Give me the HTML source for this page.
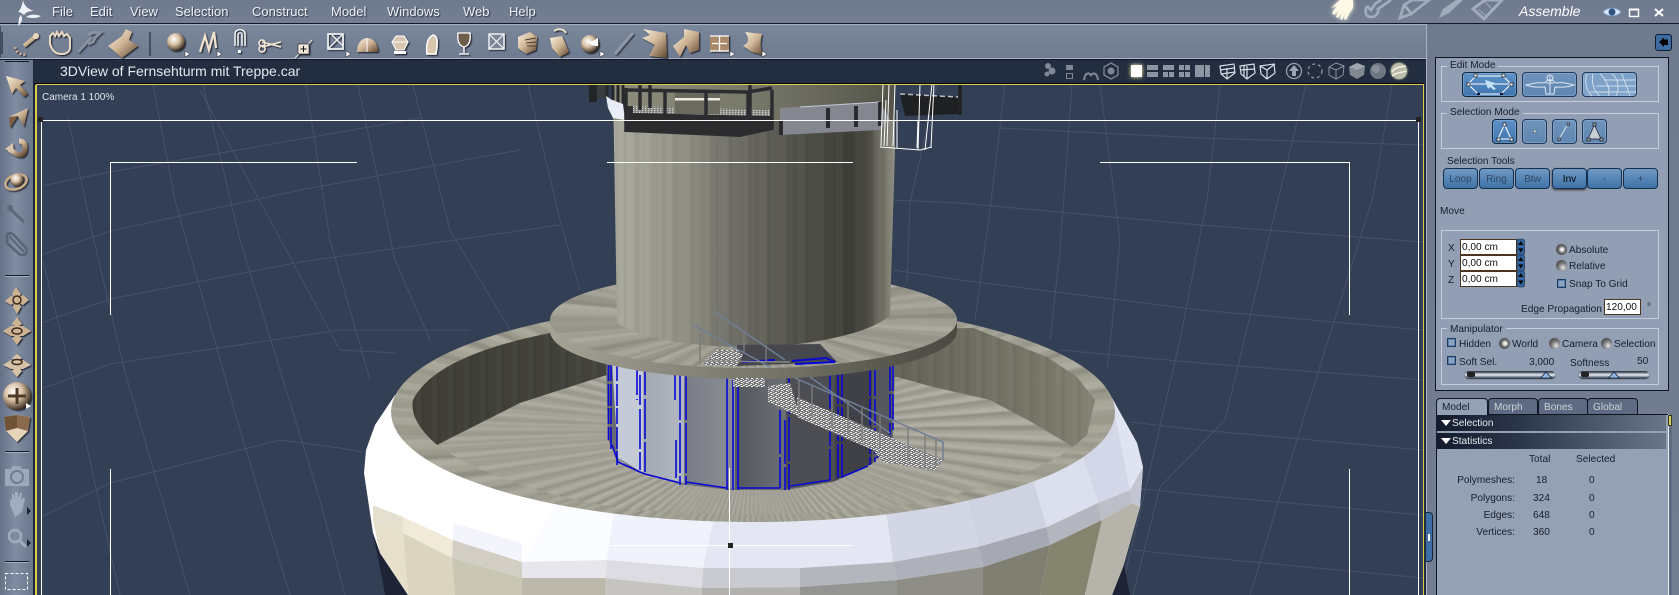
<!DOCTYPE html>
<html><head><meta charset="utf-8"><style>
html,body{margin:0;padding:0;background:#717c90}
#r{position:relative;width:1679px;height:595px;overflow:hidden;background:#717c90;font-family:"Liberation Sans",sans-serif;font-size:10.1px;color:#161e2c}
#r>*{position:absolute}
.l{position:absolute;left:0;top:0;width:1679px;height:595px}
svg.l{overflow:visible}
.t{position:absolute;white-space:nowrap;line-height:12px}
.m{font-size:13px;color:#eef1f6;text-shadow:1px 1px 1px #2a3244;top:4px;line-height:15px}
.b{position:absolute;box-sizing:border-box;border:1px solid #1f3a5c;border-radius:4px;background:linear-gradient(#6f93bb,#5f86b2);box-shadow:inset 0 0 0 1px rgba(200,220,240,.25)}
.tb{position:absolute;box-sizing:border-box;height:21px;top:168px;border:1px solid #14304f;border-radius:4px;background:linear-gradient(#6f9ac4,#3f72a8);color:#2f4763;text-align:center;line-height:21px;font-size:10.1px}
.g{position:absolute;box-sizing:border-box;border:1px solid #c3cddb;left:1441px;width:218px}
.lg{position:absolute;background:#929eb3;padding:0 3px;left:1447px;line-height:12px}
.in{position:absolute;box-sizing:border-box;background:#fff;border:1px solid #4a3520;font-size:10.1px;line-height:16px;padding-left:1px;color:#111;height:16px}
.cb{position:absolute;width:7px;height:7px;border:1px solid #1b3e66;background:#8ea3bf;box-shadow:inset 0 0 0 1px #5c82ad}
.rd{position:absolute;width:11px;height:11px;border-radius:50%;background:radial-gradient(circle at 65% 70%,#e8e8e8,#777 45%,#2c2c2c)}
.sec{position:absolute;left:1436px;width:230px;height:16px;background:linear-gradient(90deg,#121a2c,#2b3548 35%,#6a7588);color:#e8ecf2;line-height:18px;padding-left:16px;box-sizing:border-box;font-size:10.1px}
.sec:before{content:"";position:absolute;left:5px;top:5px;border-left:5px solid transparent;border-right:5px solid transparent;border-top:6px solid #fff}
.tab{position:absolute;top:398px;height:17px;box-sizing:border-box;border:1px solid #0f1626;border-bottom:0;border-radius:4px 4px 0 0;background:#5d6a81;color:#cdd3de;line-height:18px;padding-left:5px;font-size:10.1px}
.sl{position:absolute;height:7px;border-radius:4px;background:linear-gradient(#23272f,#7e8796 30%,#eef2f8 55%,#384a66);box-shadow:0 1px 1px #333}
</style></head><body><div id="r">

<!-- chrome backgrounds -->
<div style="left:0;top:0;width:1679px;height:23px;background:linear-gradient(#6e798d,#747f93)"></div>
<div style="left:0;top:23px;width:1679px;height:1px;background:#10182a"></div>
<div style="left:0;top:24px;width:1426px;height:1px;background:#a5afc0"></div>
<div style="left:0;top:25px;width:1426px;height:33px;background:linear-gradient(#7a869a,#6f7b90)"></div>
<div style="left:0;top:58px;width:1426px;height:1px;background:#aab4c5"></div>
<div style="left:0;top:59px;width:1426px;height:1px;background:#10182a"></div>
<div style="left:0;top:60px;width:33px;height:535px;background:linear-gradient(90deg,#657186,#808da3 45%,#6a768b)"></div>
<div style="left:33px;top:60px;width:3px;height:535px;background:#1d2739"></div>
<div style="left:34px;top:60px;width:1392px;height:24px;background:#222d40;border-bottom:1px solid #05080f;box-sizing:border-box"></div>
<div style="left:1426px;top:24px;width:1px;height:571px;background:#a9b3c4"></div>
<div style="left:1424px;top:60px;width:2px;height:535px;background:#222d40"></div>

<!-- viewport background -->
<div style="left:36px;top:84px;width:1388px;height:511px;background:#333f55"></div>

<svg class="l" viewBox="0 0 1679 595" style="clip-path:inset(85px 256px 0 37px)">
<g fill="none" stroke="#465269" stroke-width="1">
<polyline points="41,186 110,172 250,148 420,118"/>
<polyline points="41,255 110,231 300,190 520,150"/>
<polyline points="41,323 110,299 300,262 560,225"/>
<polyline points="41,389 110,364 340,330 470,330"/>
<polyline points="41,517 110,483 280,440 340,448 363,452"/>
<polyline points="200,90 340,350 395,353"/>
<polyline points="68,118 94,241 125,372 190,595"/>
<polyline points="43,261 72,377 100,507 120,595"/>
<polyline points="153,85 175,200 240,430 290,595"/>
<polyline points="203,85 240,240 320,500 345,595"/>
<polyline points="306,85 330,240 370,380"/>
<polyline points="358,85 395,260 430,340"/>
<polyline points="413,85 450,230 510,330"/>
<polyline points="528,85 560,220 580,290"/>
<polyline points="937,85 910,203 907,283"/>
<polyline points="1005,85 990,210 975,320"/>
<polyline points="1072,85 1060,250 1050,340"/>
<polyline points="1100,85 1120,240 1112,327 1107,370"/>
<polyline points="1220,85 1207,200 1180,340 1143,500 1120,595"/>
<polyline points="1306,85 1278,200 1225,420 1160,487 1133,595"/>
<polyline points="1392,85 1373,197 1300,430 1250,595"/>
<polyline points="893,200 960,203 1200,225 1423,242"/>
<polyline points="893,270 960,280 1200,310 1423,330"/>
<polyline points="1000,128 1200,138 1423,145"/>
<polyline points="1060,350 1200,363 1423,380"/>
<polyline points="1130,422 1200,430 1423,450"/>
<polyline points="1133,488 1200,495 1423,515"/>
<polyline points="1133,550 1200,557 1423,578"/>
</g>
<!-- dark base under tire -->
<path d="M373,533 L383,583 L385,595 L430,595 L420,540Z" fill="#1e2436"/>
<path d="M1108,595 L1123,560 L1130,595Z" fill="#1e2436"/>
<!-- white tire base -->
<path d="M395,395 L375,425 L366,450 L364,473 L373,533 L380,553 L408,595 L1112,595 L1123,567 L1140,507 L1143,467 L1137,443 L1112,398 L900,380 L600,380Z" fill="#fff"/>
<!-- row 1 -->
<path d="M570,480 L617,480 L607,560 L522,562Z" fill="#fbfcff"/>
<path d="M617,490 L720,490 L703,568 L607,560Z" fill="#f0f2fc"/>
<path d="M720,490 L883,490 L893,562 L800,568 L703,568Z" fill="#e4e7f3"/>
<path d="M883,490 L963,480 L978,547 L893,562Z" fill="#d3d7e5"/>
<path d="M963,480 L1027,460 L1047,527 L978,547Z" fill="#ced2e1"/>
<path d="M1027,460 L1077,440 L1098,503 L1047,527Z" fill="#dcdfee"/>
<path d="M1077,440 L1115,410 L1130,490 L1098,503Z" fill="#d3d7e8"/>
<path d="M1112,398 L1137,443 L1143,467 L1130,490 L1115,415Z" fill="#dfe3f2"/>
<path d="M1130,490 L1143,467 L1140,507 L1132,503Z" fill="#c2c6d2"/>
<!-- row 2 -->
<path d="M373,505 L403,517 L403,533 L373,520Z" fill="#e4dfcf"/>
<path d="M403,517 L453,540 L452,558 L403,533Z" fill="#f1ead8"/>
<path d="M453,523 L522,543 L522,562 L453,540Z" fill="#f4f4fd"/>
<path d="M453,540 L522,562 L522,578 L452,558Z" fill="#d2cec4"/>
<path d="M522,562 L607,560 L605,578 L522,578Z" fill="#e6e6ec"/>
<path d="M607,560 L703,568 L702,588 L605,578Z" fill="#dcdce2"/>
<path d="M703,568 L800,568 L800,587 L702,588Z" fill="#c9cbd1"/>
<path d="M800,568 L893,562 L897,580 L800,587Z" fill="#b4b6be"/>
<path d="M893,562 L978,547 L983,567 L897,580Z" fill="#aeb0ba"/>
<path d="M978,547 L1047,527 L1050,545 L983,567Z" fill="#a6a8b4"/>
<path d="M1047,527 L1098,503 L1102,520 L1050,545Z" fill="#b5b7c0"/>
<path d="M1098,503 L1130,490 L1132,503 L1102,520Z" fill="#bcbec8"/>
<!-- row 3 -->
<path d="M373,520 L403,533 L408,595 L380,553Z" fill="#e6dfca"/>
<path d="M403,533 L452,558 L455,595 L408,595Z" fill="#dbd4be"/>
<path d="M452,558 L522,578 L522,595 L455,595Z" fill="#c9c6b4"/>
<path d="M522,578 L605,578 L605,595 L522,595Z" fill="#bcb9ac"/>
<path d="M605,578 L702,588 L702,595 L605,595Z" fill="#c6c4c0"/>
<path d="M702,588 L800,587 L800,595 L702,595Z" fill="#b2b1b0"/>
<path d="M800,587 L897,580 L897,595 L800,595Z" fill="#949492"/>
<path d="M897,580 L983,567 L983,595 L897,595Z" fill="#8e8e86"/>
<path d="M983,567 L1050,545 L1040,595 L983,595Z" fill="#7f7f72"/>
<path d="M1050,545 L1102,520 L1085,595 L1040,595Z" fill="#85846f"/>
<path d="M1102,520 L1132,503 L1140,507 L1123,567 L1112,595 L1085,595Z" fill="#b6b4aa"/>
</svg>

<!-- rim -->
<div class="l" style="filter:blur(.8px);clip-path:path('M391,412 A362,110 0 1 1 1115,412 A362,110 0 1 1 391,412 Z');background:repeating-conic-gradient(from 3deg at 753px 440px,rgba(255,255,255,.06) 0 1.3deg,rgba(0,0,0,.06) 1.3deg 2.9deg,transparent 2.9deg 4.3deg),repeating-conic-gradient(at 753px 440px,rgba(0,0,0,.07) 0 .9deg,transparent .9deg 2.3deg,rgba(255,255,255,.05) 2.3deg 3.7deg),#a3a294"></div>

<!-- wall -->
<div class="l" style="clip-path:path('M437,445 C420,430 410,415 413,400 C430,365 490,345 550,333 L973,328 L1047,357 L1077,377 L1095,400 L1087,435 L1073,447 L1033,423 L990,400 L933,387 L897,377 L607,375 L520,403 Z');background:repeating-linear-gradient(90deg,rgba(255,255,255,.025) 0 5px,rgba(0,0,0,.035) 5px 9px,transparent 9px 16px),linear-gradient(90deg,#5e5e55 0,#4a4a42 10%,#3f3f38 25%,#45453e 40%,#777769 62%,#a3a396 75%,#94948a 90%,#9c9c8e 100%)"></div>

<!-- floor -->
<div class="l" style="filter:blur(.8px);clip-path:path('M437,445 L520,403 L607,375 L897,377 L933,387 L990,400 L1033,423 L1073,447 C1040,472 970,496 883,508 C800,516 700,516 617,508 C540,494 480,475 437,445 Z');background:repeating-conic-gradient(from 1deg at 753px 430px,rgba(255,255,255,.07) 0 1.1deg,rgba(0,0,0,.07) 1.1deg 2.4deg,transparent 2.4deg 3.1deg),repeating-conic-gradient(at 753px 430px,rgba(0,0,0,.07) 0 .7deg,transparent .7deg 2.1deg,rgba(255,255,255,.06) 2.1deg 3.3deg),#a7a599"></div>

<!-- glass -->
<svg class="l" viewBox="0 0 1679 595">
<defs>
<linearGradient id="p3" x1="0" x2="1"><stop offset="0" stop-color="#787c85"/><stop offset="1" stop-color="#8b8e95"/></linearGradient>
<linearGradient id="p4" x1="0" x2="1"><stop offset="0" stop-color="#54575e"/><stop offset="1" stop-color="#6c6f76"/></linearGradient>
<linearGradient id="p2" x1="0" x2="1"><stop offset="0" stop-color="#a2a8b2"/><stop offset="1" stop-color="#b2b8c2"/></linearGradient>
</defs>
<path d="M606,360 L895,360 L893,440 L873,463 L833,482 L787,490 L730,490 L680,484 L638,472 L617,458 L608,440Z" fill="#6a6c72"/>
<path d="M612,360 L643,360 L643,473 L618,458Z" fill="#c4cbd6"/>
<path d="M643,360 L684,360 L684,483 L643,473Z" fill="url(#p2)"/>
<path d="M684,360 L735,360 L735,489 L684,483Z" fill="url(#p3)"/>
<path d="M735,360 L786,360 L786,489 L735,489Z" fill="url(#p4)"/>
<path d="M786,360 L835,360 L835,481 L786,489Z" fill="#4c4e54"/>
<path d="M835,360 L872,360 L872,464 L835,481Z" fill="#3f4146"/>
<path d="M872,360 L892,360 L892,440 L872,464Z" fill="#55575d"/>
<g fill="none" stroke="#0808d2" stroke-width="1.6">
<path d="M608.500,365V440 M611,365V450 M617,365V465" stroke-dasharray="16 3 22 2"/>
<path d="M637,365V400 M640,375V470 M645,365V474" stroke-dasharray="30 4 40 3"/>
<path d="M675,370V400 M676,440V478 M680,370V485 M686,370V485" stroke-dasharray="50 3"/>
<path d="M727,370V490 M733,380V490 M738,380V490"/>
<path d="M780,410V488 M785,420V490 M789,370V490" stroke-dasharray="44 3"/>
<path d="M830,375V480 M838,370V478 M842,370V478" stroke-dasharray="34 3"/>
<path d="M870,370V465 M875,370V462 M890,365V435 M893,365V430" stroke-dasharray="26 3"/>
<path d="M612,445 L618,462 L640,472 L645,474 L680,483 M686,482 L727,488 M738,488 L780,488 M790,486 L830,480 M842,477 L868,466 M877,458 L890,440"/>
</g>
</svg>

<!-- disk edge + top -->
<svg class="l" viewBox="0 0 1679 595">
<defs><linearGradient id="de" x1="0" x2="1"><stop offset="0" stop-color="#a5a396"/><stop offset=".3" stop-color="#8a887c"/><stop offset=".6" stop-color="#707064"/><stop offset=".85" stop-color="#55554c"/><stop offset="1" stop-color="#4a4a42"/></linearGradient></defs>
<path d="M550,320 L550,331 A203,48 0 0 0 957,331 L957,320Z" fill="url(#de)"/>
</svg>
<div class="l" style="filter:blur(.7px);clip-path:path('M550,320 A203,48 0 1 1 957,320 A203,48 0 1 1 550,320 Z');background:repeating-conic-gradient(from 2deg at 753px 320px,rgba(255,255,255,.07) 0 3deg,rgba(0,0,0,.07) 3deg 6.500deg,transparent 6.500deg 9deg),repeating-conic-gradient(at 753px 320px,rgba(0,0,0,.06) 0 1.500deg,transparent 1.500deg 4deg,rgba(255,255,255,.06) 4deg 5.500deg),#a19f93"></div>

<!-- main cylinder -->
<div class="l" style="clip-path:path('M613,84 L895,84 L895,150 L890,315 C870,335 800,347 750,347 C700,347 640,340 617,323 Z');background:repeating-linear-gradient(90deg,rgba(255,255,255,.025) 0 7px,rgba(0,0,0,.03) 7px 11px,transparent 11px 19px),repeating-linear-gradient(90deg,rgba(0,0,0,.03) 0 3px,transparent 3px 13px),linear-gradient(90deg,transparent 0,transparent 613px,#abaa9f 613px,#a3a296 640px,#8e8d81 690px,#74746c 725px,#62625a 760px,#4d4d46 810px,#3e3e38 852px,#4c4c44 868px,#77766b 884px,#8f8e82 895px)"></div>

<!-- stairs, structure, frame -->
<svg class="l" viewBox="0 0 1679 595" style="clip-path:inset(85px 256px 0 37px)">
<defs>
<pattern id="sp" width="5" height="4" patternUnits="userSpaceOnUse"><rect width="5" height="4" fill="#77777a"/><rect x="0" y="0" width="2" height="1" fill="#eee"/><rect x="3" y="1" width="2" height="1" fill="#ddd"/><rect x="1" y="2" width="2" height="1" fill="#f4f4f4"/><rect x="3" y="3" width="1" height="1" fill="#ccc"/></pattern>
<pattern id="sg" width="3" height="2" patternUnits="userSpaceOnUse"><rect width="3" height="2" fill="#94948e"/><rect width="1" height="1" fill="#d0d0cc"/><rect x="2" y="1" width="1" height="1" fill="#6f6f6a"/></pattern>
<linearGradient id="topc" x1="0" x2="1"><stop offset="0" stop-color="#8e8d7c"/><stop offset=".5" stop-color="#77786a"/><stop offset="1" stop-color="#545449"/></linearGradient>
</defs>
<!-- opening in disk -->
<path d="M737,345 L820,344 L837,362 L737,366Z" fill="#46484e"/>
<path d="M742,362 L775,360 M792,361 L826,358 L835,362 L795,364" fill="none" stroke="#0808d2" stroke-width="2"/>
<path d="M703,365 L717,350 L737,350 L743,355 L737,366Z" fill="url(#sp)"/>
<path d="M733,378 L765,378 L765,387 L733,387Z" fill="url(#sp)"/>
<path d="M768,386 L790,383 L800,417 L768,402Z" fill="url(#sp)"/>
<path d="M797,397 L943,460 L935,470 L883,462 L873,450 L797,417Z" fill="url(#sp)"/>
<g fill="none" stroke="#6f7f96" stroke-width="1.500">
<path d="M715,312 L785,360"/><path d="M693,325 L770,367"/>
<path d="M795,378 L943,442"/><path d="M810,377 L890,433"/>
<path d="M943,442 V460"/>
</g>
<g fill="none" stroke="#7b7c78" stroke-width="1.400">
<path d="M700,333V365M720,315V355M744,332V352M766,345V362M799,380V412M812,386V418M832,394V428M848,401V434M862,408V442M880,416V447M908,428V460M925,435V468M936,440V466"/>
<path d="M700,361 L790,362" stroke="#8a8a86"/>
</g>

<!-- top structure -->
<rect x="613" y="84" width="282" height="36" fill="url(#topc)"/>
<path d="M780,108 L880,102 L890,120 L880,130 L780,135Z" fill="#84878f"/>
<path d="M800,107 L880,102" stroke="#c6cad4" stroke-width="1"/>
<path d="M781,120 V135 M828,108V128 M856,106V127 M880,102V126" stroke="#2a2b2e" stroke-width="4"/>
<rect x="589" y="84" width="8" height="18" fill="#232428"/><rect x="597" y="84" width="9" height="14" fill="#3a3c40"/>
<path d="M607,84V100 M613,84V100 M618,84V105 M623,84V112" stroke="#27282c" stroke-width="3"/>
<path d="M606,96 L612,100 L623,104 L625,120 L613,118 L608,108Z" fill="#e8edf8"/>
<path d="M626,106 L772,110 L772,130 L740,137 L626,132Z" fill="#2c2c2f"/>
<path d="M633,106 L770,110 L770,116 L633,113Z" fill="url(#sg)"/>
<rect x="675" y="90" width="45" height="24" fill="#6a6b5e"/>
<rect x="675" y="98" width="45" height="2.500" fill="#ecebe4"/>
<g fill="none" stroke="#2c2c30" stroke-width="3.500">
<path d="M626,90 L748,92 L748,132 M772,90 L772,130 M748,92 L772,88"/>
<path d="M626,88V132 M665,90V130 M706,90V132 M640,84V110 M650,84V108 M750,84V116"/>
</g>
<path d="M900,94 L958,97 L958,114 L905,116 Z" fill="#1f2022"/>
<path d="M900,94 L958,97" stroke="#b8bcc4" stroke-width="1.500" stroke-dasharray="5 3"/>
<path d="M960,84 V115" stroke="#232326" stroke-width="4"/>
<g fill="none" stroke="#fff" stroke-width="1">
<path d="M881,146 L883,84 M887,146 L889,84 M893,146 L895,84 M884,146 L886,100 M897,148 V110 M880,147 L920,150 L932,147"/>
<path d="M918,150 L920,84 M925,150 L932,84 M931,147 L934,84 M917,148 L918,120"/>
</g>
<!-- safe frame -->
<g stroke="#fff" stroke-width="1" fill="none" shape-rendering="crispEdges">
<path d="M41,120.500H1418.500M41.500,120V595M1418.500,120V595"/>
<path d="M110,162.500H357M607,162.500H853M1100,162.500H1349"/>
<path d="M110.500,162V315M1349.500,162V315M110.500,469V595M1349.500,469V595"/>
<path d="M729.500,468V595"/>
</g>
<path d="M610,545.500H853" stroke="#fff" stroke-width="1"/>
<rect x="728" y="543" width="5" height="5" fill="#222"/>
<rect x="38" y="117" width="5" height="5" fill="#222"/><rect x="1416" y="117" width="5" height="5" fill="#222"/>
</svg>

<!-- yellow border -->
<div style="left:36px;top:84px;width:1388px;height:511px;border:1px solid #d8cc48;border-bottom:0;box-sizing:border-box"></div>
<div style="left:35px;top:85px;width:1px;height:510px;background:#d8cc48"></div>

<!-- right panel -->
<div style="left:1427px;top:24px;width:252px;height:571px;background:linear-gradient(#6f7a8e,#727d91)"></div>
<div style="left:1435px;top:57px;width:234px;height:334px;box-sizing:border-box;background:#929eb3;border:1px solid #0e1420"></div>
<div style="left:1655px;top:34px;width:17px;height:17px;box-sizing:border-box;background:#3e6ca2;border:1px solid #0e1d30;border-radius:3px"></div>
<svg class="l" viewBox="0 0 1679 595"><path d="M1659,42 L1664,37.500 V39.500 H1668 V45 H1664 V47Z" fill="#000"/></svg>

<div class="g" style="top:66px;height:36px"></div><span class="lg" style="top:60px">Edit Mode</span>
<div class="b" style="left:1462px;top:72px;width:55px;height:25px;background:linear-gradient(#5e92c8,#3f75ae);border-color:#10283f"></div>
<div class="b" style="left:1522px;top:72px;width:55px;height:25px"></div>
<div class="b" style="left:1582px;top:72px;width:55px;height:25px;background:#7ea2c8"></div>
<div class="g" style="top:113px;height:36px"></div><span class="lg" style="top:107px">Selection Mode</span>
<div class="b" style="left:1492px;top:119px;width:25px;height:25px;background:linear-gradient(#5e92c8,#3f75ae);border-color:#10283f"></div>
<div class="b" style="left:1522px;top:119px;width:25px;height:25px"></div>
<div class="b" style="left:1552px;top:119px;width:25px;height:25px"></div>
<div class="b" style="left:1582px;top:119px;width:25px;height:25px"></div>
<svg class="l" viewBox="0 0 1679 595">
<g fill="none" stroke="#fff" stroke-width="1">
<path d="M1468,84 L1476,76 L1503,76 L1511,84 L1501,94 L1478,94Z M1468,84H1511"/>
</g>
<path d="M1485,80 L1495,83 L1492,85 L1496,89 L1494,90 L1490,87 L1488,89Z" fill="#c6e2fb"/>
<g fill="#fff" stroke="#111" stroke-width=".7"><rect x="1474" y="74" width="3" height="3"/><rect x="1502" y="74" width="3" height="3"/><rect x="1467" y="83" width="3" height="3"/><rect x="1510" y="83" width="3" height="3"/></g>
<rect x="1477" y="93" width="3" height="2" fill="#113"/><rect x="1500" y="93" width="3" height="2" fill="#113"/>
<!-- figure -->
<g fill="none" stroke="#dce6f0" stroke-width="1"><path d="M1526,85 C1535,83 1538,82 1544,83 L1548,80 H1552 L1556,83 C1562,82 1566,83 1574,85 C1565,88 1560,87 1555,87 L1554,94 H1546 L1545,87 C1540,87 1534,88 1526,85Z"/><circle cx="1550" cy="78" r="3"/><path d="M1546,83H1554M1550,76V94"/></g>
<!-- mesh -->
<g fill="none" stroke="#d6e4f2" stroke-width="1" opacity=".9"><path d="M1587,74 C1584,82 1587,92 1592,96 M1593,74 C1591,82 1594,92 1600,96 M1600,74 C1603,76 1612,88 1608,96 M1612,74 C1618,78 1620,88 1616,96 M1622,74 L1630,96 M1604,80 H1636 M1596,86 H1636 M1590,92 H1636"/></g>
<!-- selection mode -->
<g fill="none" stroke="#fff"><path d="M1504.500,124.500 L1498,139 H1511Z"/></g>
<g fill="#fff" stroke="#111" stroke-width=".7"><rect x="1503" y="123" width="3" height="3"/><rect x="1497" y="138" width="3" height="3"/><rect x="1510" y="138" width="3" height="3"/></g>
<rect x="1533.500" y="130" width="2.500" height="2.500" fill="#dfe7f0" stroke="#555" stroke-width=".5"/>
<path d="M1559,139 L1568,124" stroke="#d6e0ec"/><rect x="1558" y="138" width="2.500" height="2.500" fill="#99a" stroke="#222" stroke-width=".6"/><rect x="1567" y="123" width="2.500" height="2.500" fill="#99a" stroke="#222" stroke-width=".6"/>
<path d="M1594.500,125 L1588,139 H1601Z" fill="#c8cdd6" stroke="#223" stroke-width=".7"/>
<g fill="#9aa" stroke="#111" stroke-width=".7"><rect x="1593" y="123" width="3" height="3"/><rect x="1587" y="138" width="3" height="3"/><rect x="1600" y="138" width="3" height="3"/></g>
</svg>

<span class="t" style="left:1447px;top:156px">Selection Tools</span>
<div class="tb" style="left:1443px;width:35px">Loop</div>
<div class="tb" style="left:1479px;width:35px">Ring</div>
<div class="tb" style="left:1515px;width:35px">Btw</div>
<div class="tb" style="left:1552px;width:35px;color:#000;box-shadow:0 1px 2px #333">Inv</div>
<div class="tb" style="left:1587px;width:35px">-</div>
<div class="tb" style="left:1623px;width:35px">+</div>

<span class="t" style="left:1440px;top:206px">Move</span>
<div class="g" style="top:230px;height:89px"></div>
<span class="t" style="left:1448px;top:243px">X</span><span class="t" style="left:1448px;top:259px">Y</span><span class="t" style="left:1448px;top:275px">Z</span>
<div class="in" style="left:1460px;top:239px;width:57px">0,00 cm</div>
<div class="in" style="left:1460px;top:255px;width:57px">0,00 cm</div>
<div class="in" style="left:1460px;top:271px;width:57px">0,00 cm</div>
<svg class="l" viewBox="0 0 1679 595">
<g fill="#3566a0" stroke="#14263c" stroke-width=".6"><rect x="1517" y="239" width="7.500" height="16" rx="2"/><rect x="1517" y="255" width="7.500" height="16" rx="2"/><rect x="1517" y="271" width="7.500" height="16" rx="2"/></g>
<path d="M1520.800,241 l2.700,4 h-5.400Z M1520.800,252.500 l2.700,-4 h-5.400Z M1520.800,257 l2.700,4 h-5.400Z M1520.800,268.500 l2.700,-4 h-5.400Z M1520.800,273 l2.700,4 h-5.400Z M1520.800,284.500 l2.700,-4 h-5.400Z" fill="#000"/>
</svg>
<div class="rd" style="left:1556px;top:244px;background:radial-gradient(circle at 55% 50%,#eee 15%,#666 45%,#333)"></div><span class="t" style="left:1569px;top:245px">Absolute</span>
<div class="rd" style="left:1556px;top:260px"></div><span class="t" style="left:1569px;top:261px">Relative</span>
<div class="cb" style="left:1557px;top:279px"></div><span class="t" style="left:1569px;top:279px">Snap To Grid</span>
<span class="t" style="left:1521px;top:304px">Edge Propagation</span>
<div class="in" style="left:1604px;top:299px;width:37px;height:16px">120,00</div>
<span class="t" style="left:1647px;top:302px">°</span>

<div class="g" style="top:328px;height:57px"></div><span class="lg" style="top:324px">Manipulator</span>
<div class="cb" style="left:1447px;top:338px"></div><span class="t" style="left:1459px;top:339px">Hidden</span>
<div class="rd" style="left:1499px;top:338px;background:radial-gradient(circle at 55% 50%,#eee 15%,#666 45%,#333)"></div><span class="t" style="left:1512px;top:339px">World</span>
<div class="rd" style="left:1549px;top:338px"></div><span class="t" style="left:1562px;top:339px">Camera</span>
<div class="rd" style="left:1601px;top:338px"></div><span class="t" style="left:1614px;top:339px">Selection</span>
<div class="cb" style="left:1447px;top:356px"></div><span class="t" style="left:1459px;top:357px">Soft Sel.</span>
<span class="t" style="left:1529px;top:357px">3,000</span>
<span class="t" style="left:1570px;top:358px">Softness</span>
<span class="t" style="left:1637px;top:356px">50</span>
<div class="sl" style="left:1465px;top:371px;width:90px"></div>
<div class="sl" style="left:1579px;top:371px;width:70px"></div>
<svg class="l" viewBox="0 0 1679 595"><path d="M1540.500,378 L1546,372 L1551.500,378Z M1608.500,378 L1614,372 L1619.500,378Z" fill="#8fb7e6" stroke="#14263c" stroke-width=".8"/><rect x="1467" y="372" width="8" height="5" rx="2" fill="#222"/><rect x="1581" y="372" width="8" height="5" rx="2" fill="#222"/></svg>

<!-- tabs -->
<div style="left:1436px;top:414px;width:232px;height:181px;background:#94a0b4;border-left:1px solid #0e1420;box-sizing:border-box"></div>
<div class="tab" style="left:1488px;width:50px">Morph</div>
<div class="tab" style="left:1538px;width:50px">Bones</div>
<div class="tab" style="left:1587px;width:51px">Global</div>
<div class="tab" style="left:1436px;width:52px;height:18px;background:#94a0b4;color:#161e2c;border-right-color:#0e1420">Model</div>
<div style="left:1488px;top:414px;width:180px;height:1px;background:#0e1420"></div>
<div style="left:1668px;top:414px;width:1px;height:181px;background:#e8ecf2"></div>
<div style="left:1669px;top:414px;width:3px;height:181px;background:#5f6b80"></div>
<div style="left:1668px;top:415px;width:4px;height:11px;background:#d8cf62;border:1px solid #3a3a20;box-sizing:border-box"></div>
<div class="sec" style="top:415px">Selection</div>
<div class="sec" style="top:433px">Statistics</div>
<span class="t" style="left:1529px;top:454px">Total</span><span class="t" style="left:1576px;top:454px">Selected</span>
<span class="t" style="right:164px;top:475px">Polymeshes:</span><span class="t" style="left:1536px;top:475px">18</span><span class="t" style="left:1589px;top:475px">0</span>
<span class="t" style="right:164px;top:493px">Polygons:</span><span class="t" style="left:1533px;top:493px">324</span><span class="t" style="left:1589px;top:493px">0</span>
<span class="t" style="right:164px;top:510px">Edges:</span><span class="t" style="left:1533px;top:510px">648</span><span class="t" style="left:1589px;top:510px">0</span>
<span class="t" style="right:164px;top:527px">Vertices:</span><span class="t" style="left:1533px;top:527px">360</span><span class="t" style="left:1589px;top:527px">0</span>
<div style="left:1426px;top:512px;width:7px;height:50px;background:#3e6ea6;border:1px solid #14263c;border-left:0;border-radius:0 4px 4px 0;box-sizing:border-box"></div>
<div style="left:1428px;top:534px;width:2px;height:7px;background:#fff"></div>

<!-- menu text -->
<span class="t m" style="left:52px">File</span>
<span class="t m" style="left:90px">Edit</span>
<span class="t m" style="left:130px">View</span>
<span class="t m" style="left:175px">Selection</span>
<span class="t m" style="left:252px">Construct</span>
<span class="t m" style="left:331px">Model</span>
<span class="t m" style="left:387px">Windows</span>
<span class="t m" style="left:463px">Web</span>
<span class="t m" style="left:509px">Help</span>
<span class="t" style="left:1519px;top:3px;font-size:14px;line-height:16px;font-style:italic;color:#fff">Assemble</span>
<span class="t" style="left:60px;top:63px;font-size:14px;line-height:17px;color:#e4e8ee">3DView of Fernsehturm mit Treppe.car</span>
<span class="t" style="left:42px;top:92px;font-size:10px;color:#e2e6ec">Camera 1 100%</span>

<!-- icons -->
<svg class="l" viewBox="0 0 1679 595">
<defs>
<linearGradient id="c" x1="0" y1="0" x2="1" y2="1"><stop offset="0" stop-color="#fbf1e0"/><stop offset=".5" stop-color="#cdb394"/><stop offset="1" stop-color="#5d452f"/></linearGradient>
<radialGradient id="ball" cx=".38" cy=".35" r=".7"><stop offset="0" stop-color="#fff"/><stop offset=".45" stop-color="#d6bfa3"/><stop offset="1" stop-color="#2e2014"/></radialGradient>
<filter id="ds" x="-30%" y="-30%" width="170%" height="170%"><feDropShadow dx="1.200" dy="1.200" stdDeviation=".6" flood-color="#141a28" flood-opacity=".9"/></filter>
</defs>
<path d="M0,26V58M2,32V54M150,32V56" stroke="#151c2c" stroke-width="1"/>
<!-- logo -->
<path d="M23,0 C24,6 28,9 34,11 C29,11 26,12 24,15 C21,13 20,12 18,12 C21,9 22,5 23,0Z M41,16 C35,14 30,14 26,17 C30,18 36,19 41,16Z M21,15 C23,19 22,23 18,26 C19,21 18,18 21,15Z" fill="#eef2f8"/>

<g filter="url(#ds)">
<!-- top toolbar -->
<path d="M35,37 L24,46" stroke="url(#c)" stroke-width="4"/><circle cx="36" cy="36" r="3" fill="#e8d8c0"/>
<path d="M15,47 a9,9 0 0 0 12,7" fill="none" stroke="#cdb394" stroke-width="2.500" stroke-dasharray="2 2"/>
<path d="M50,44 V36 L53,33 L55,36 L57,32 L59,36 L62,32 L64,36 L67,34 L70,38 V47 C70,52 66,54 61,54 C55,54 52,50 50,44Z" fill="none" stroke="#e7d7c0" stroke-width="2"/>
<path d="M78,52 L92,37 M88,36 C92,31 98,33 100,33 L95,38 L93,42 L88,44" fill="none" stroke="#8f98a8" stroke-width="3" opacity=".8"/>
<path d="M108,46 L122,36 L126,29 L132,32 L129,40 L138,46 L122,58Z" fill="url(#c)"/>
<circle cx="176" cy="42" r="9" fill="url(#ball)"/>
<path d="M200,52 L205,36 L209,50 L214,32 L216,48" fill="none" stroke="#efe2cd" stroke-width="2.200"/>
<path d="M235,46 V34 C235,28 245,28 245,34 V46 M238,46 V35 C238,32 242,32 242,35 V46" fill="none" stroke="#fff" stroke-width="1.300"/><rect x="238" y="50" width="3" height="3" fill="#fff"/>
<path d="M262,42 L281,47 M262,47 L281,42 M262,40 a3,3 0 1 0 .1,0 M262,46 a3,3 0 1 0 .1,0" fill="none" stroke="#f2e7d6" stroke-width="1.500"/>
<path d="M295,58 L312,40" stroke="#efe6d8"/><rect x="298" y="44" width="11" height="10" fill="#efe6d8" stroke="#222" stroke-width=".6"/><path d="M303.500,46V52M300.500,49H306.500" stroke="#111"/>
<rect x="328" y="34" width="15" height="15" fill="none" stroke="#fff" stroke-width="1.500"/><path d="M328,49 L343,34 M331,34 L343,46" stroke="#eee" stroke-width="1.300"/>
<path d="M357,52 C357,42 363,38 367,38 C372,38 378,42 378,52Z" fill="url(#c)"/><path d="M367,38V52" stroke="#fff"/>
<path d="M392,42 H408 L404,36 H396Z M392,42 L396,50 H404 L408,42" fill="#d8c6ae" stroke="#fff"/><rect x="394" y="51" width="12" height="3" fill="#fff"/>
<path d="M427,54 C426,46 427,38 433,35 C438,36 438,42 436,54Z" fill="#d8c6ae" stroke="#fff" stroke-width="1.500"/>
<path d="M458,33 H470 C471,42 468,46 464,47 C460,46 457,42 458,33Z M464,47 V53 M459,54 H469" fill="#6d5d4a" stroke="#fff" stroke-width="1.300"/>
<rect x="489" y="34" width="15" height="15" fill="#7d8597" stroke="#fff" stroke-width="1.300"/><path d="M489,34 L504,49 M504,34 L489,49" stroke="#fff"/>
<path d="M518,37 L530,32 L537,37 L536,50 L526,54 L518,48Z" fill="url(#c)"/><path d="M525,40 L536,38 M526,43 L536,42 M527,46 L536,46" stroke="#4d3b2a"/>
<path d="M550,38 L562,36 L569,52 L560,57 L552,48Z" fill="url(#c)"/><path d="M554,31 C558,28 564,29 566,33" fill="none" stroke="#e8dcc8" stroke-width="2"/>
<circle cx="590" cy="44" r="9" fill="url(#ball)"/><path d="M588,40 C592,44 596,38 598,38 L598,46 C594,46 590,46 588,40Z" fill="#fff"/>
<path d="M615,54 L633,33" stroke="#98a1b0" stroke-width="3" opacity=".8"/>
<path d="M643,29 L666,33 L667,58 L649,56 L655,45 L642,38 L650,35Z" fill="url(#c)"/>
<path d="M673,46 L684,37 L684,29 L699,32 L699,50 L690,53 L686,45 L680,57Z" fill="url(#c)"/>
<rect x="710" y="36" width="19" height="15" fill="#a8896b"/><path d="M710,36H729M710,51H729M712,43.500H727M719.500,36V51" stroke="#fff" stroke-width="1.300"/>
<path d="M745,32 L762,34 C760,42 760,48 763,55 L752,52 L743,46 C750,42 749,38 745,32Z" fill="url(#c)"/>
</g>
<g fill="#fff" stroke="#222" stroke-width=".5">
<path d="M185,59 L190,62 L185,65Z M217,59 L222,62 L217,65Z M346,59 L351,62 L346,65Z M600,59 L605,62 L600,65Z M730,59 L735,62 L730,65Z M762,59 L767,62 L762,65Z" transform="translate(0,-8)"/>
</g>

<!-- left toolbar -->
<path d="M5,61.500H29M5,275.500H29M5,451.500H29M5,561.500H29" stroke="#111c2c"/>
<path d="M5,276.500H29M5,452.500H29M5,562.500H29" stroke="#a3aec0"/>
<g filter="url(#ds)">
<path d="M6,76 L25,81 L20,85 L28,94 L24,97 L16,88 L12,94Z" fill="url(#c)"/>
<path d="M9,117 L28,108 L24,127 L18,116Z" fill="url(#c)"/><path d="M9,117 L18,116 L10,128Z" fill="#7d6146"/>
<path d="M9,149 C14,153 24,160 25,149 C26,144 23,141 19,141" fill="none" stroke="url(#c)" stroke-width="5"/><path d="M5,149 L13,143 L14,153Z" fill="#d8c6ae"/>
<ellipse cx="16" cy="182" rx="11" ry="7" fill="none" stroke="#c7ac8c" stroke-width="2.500" transform="rotate(-20 16 182)"/><circle cx="17" cy="180" r="6.500" fill="url(#ball)"/>
</g>
<path d="M8,207 L24,222" stroke="#5d687c" stroke-width="3"/><circle cx="10" cy="208" r="3" fill="#5d687c"/>
<path d="M7,238 C5,233 11,232 14,235 L26,248 C29,253 24,257 19,254 L7,243Z" fill="none" stroke="#596478" stroke-width="2.500"/><path d="M9,236 L24,252" stroke="#596478" stroke-width="2"/>
<g filter="url(#ds)">
<path d="M16,287 L21,294 L19,297 L23,295 L29,300 L23,305 L19,303 L21,307 L17,314 L13,307 L14,303 L11,305 L5,301 L11,296 L14,297 L12,294Z" fill="#cdb394"/><circle cx="17" cy="300" r="4" fill="none" stroke="#3d2c1e" stroke-width="1.500"/>
<path d="M17,317 L22,324 L19,326 L23,326 L31,331 L23,336 L19,336 L22,338 L17,345 L12,338 L15,336 L11,336 L3,331 L11,326 L15,326 L12,324Z" fill="#cdb394"/><ellipse cx="17" cy="331" rx="5" ry="3" fill="none" stroke="#3d2c1e" stroke-width="1.500"/>
<path d="M17,354 L22,358 L19,360 L23,360 L31,365 L23,369 L20,369 L22,371 L17,377 L12,371 L14,369 L11,369 L3,365 L11,360 L15,360 L12,358Z" fill="#d6c2a6"/><ellipse cx="17" cy="362" rx="5" ry="2.500" fill="none" stroke="#3d2c1e" stroke-width="1.500"/>
<circle cx="17" cy="396" r="14" fill="url(#ball)"/><path d="M8,396H26M17,388V404" stroke="#4d3b2a" stroke-width="3"/>
<path d="M4,417 L17,415 L30,417 L28,431 L17,442 L6,431Z" fill="#e6d4ba"/><path d="M4,417 L17,415 L17,428 L6,431Z" fill="#6f5236"/><path d="M17,415 L30,417 L28,431 L17,428Z" fill="#8a6b4c"/>
</g>
<g fill="#a1acbe" opacity=".9">
<path d="M5,469 H11 L13,466 H20 L22,469 H29 V486 H5Z"/>
</g>
<circle cx="17" cy="477" r="6" fill="none" stroke="#6f7b90" stroke-width="2"/>
<path d="M10,505 V499 L12,500 V494 L14,494 L15,498 V492 H18 V498 L20,493 H22 L21,500 L24,497 L25,499 L22,512 L15,517Z" fill="#a1acbe"/>
<circle cx="15" cy="536" r="6" fill="none" stroke="#a1acbe" stroke-width="2.500"/><path d="M20,541 L26,547" stroke="#a1acbe" stroke-width="3"/>
<path d="M27,507 L31,511 L27,515Z M27,539 L31,543 L27,547Z" fill="#1a2230"/>
<rect x="5.500" y="573.500" width="22" height="16" fill="none" stroke="#fff" stroke-dasharray="3 2"/>
<path d="M26,403 L31,406 L26,409Z" fill="#fff"/>

<!-- title bar view icons -->
<g fill="#7d8796"><circle cx="1048" cy="66" r="3"/><circle cx="1052" cy="71" r="3.500"/><circle cx="1047" cy="74" r="2.500"/><rect x="1066" y="65" width="7" height="5"/><path d="M1069.500,70V73"/></g>
<rect x="1066.500" y="73.500" width="6" height="5" fill="none" stroke="#7d8796"/>
<path d="M1084,80 C1085,72 1090,72 1091,76 C1092,72 1097,72 1098,80" fill="none" stroke="#7d8796" stroke-width="2"/>
<path d="M1111,63 L1118,67 V75 L1111,79 L1104,75 V67Z" fill="none" stroke="#7d8796" stroke-width="1.300"/><circle cx="1111" cy="71" r="3.500" fill="#7d8796"/>
<rect x="1131" y="65" width="11" height="12" fill="#fff" style="filter:drop-shadow(0 0 2px #ffffa0)"/>
<g fill="#8d95a2"><rect x="1147" y="65" width="11" height="5"/><rect x="1147" y="72" width="11" height="5"/><rect x="1163" y="65" width="11" height="5"/><rect x="1163" y="72" width="5" height="5"/><rect x="1169" y="72" width="5" height="5"/><rect x="1179" y="65" width="5" height="5"/><rect x="1185" y="65" width="5" height="5"/><rect x="1179" y="72" width="5" height="5"/><rect x="1185" y="72" width="5" height="5"/><rect x="1195" y="65" width="9" height="12"/><rect x="1205" y="65" width="5" height="12"/></g>
<g fill="none" stroke="#d7dde6" stroke-width="1.200">
<path d="M1220,66 L1234,64 L1235,73 L1227,79 L1221,74Z M1227,68 V79 M1220,70 L1234,68 M1221,74 L1235,72"/>
<path d="M1240,66 L1254,64 L1255,73 L1247,79 L1241,74Z M1247,66 V79 M1240,70 L1254,69 M1244,66 V76"/>
<path d="M1260,66 L1274,64 L1275,73 L1267,79 L1261,74Z M1267,70 V79 M1260,66 L1267,70 L1275,64"/>
</g>
<circle cx="1294" cy="71" r="7.500" fill="none" stroke="#9aa3b1" stroke-width="1.200"/><path d="M1294,65 L1299,71 H1296 V76 H1292 V71 H1289Z" fill="#9aa3b1"/>
<circle cx="1315" cy="71" r="7" fill="none" stroke="#8d95a2" stroke-width="1.300" stroke-dasharray="3 3"/>
<path d="M1329,67 L1336,63 L1344,66 L1343,75 L1336,79 L1329,75Z M1329,67 L1336,70 L1344,66 M1336,70V79" fill="none" stroke="#8d95a2"/>
<path d="M1349,67 L1357,63 L1365,66 L1364,75 L1357,79 L1350,75Z" fill="#80878f"/><path d="M1349,67 L1357,70 L1365,66 L1357,63Z" fill="#a0a6ae"/>
<circle cx="1378" cy="71" r="8" fill="#6e7682"/><circle cx="1376" cy="69" r="4" fill="#8d95a0" opacity=".8"/>
<circle cx="1399" cy="71" r="8" fill="#bdbba9" style="filter:drop-shadow(0 0 1px #ffffc0)"/><path d="M1392,72 C1396,66 1402,67 1406,66 M1392,76 C1396,72 1402,73 1406,71" stroke="#f4f2e4" stroke-width="1.500" fill="none"/>

<!-- top right -->
<g style="filter:drop-shadow(0 0 2px #fffde0)"><path d="M1353,0 L1353,8 L1349,14 L1346,20 L1344,19 L1345,13 L1342,20 L1340,19 L1342,12 L1338,18 L1336,17 L1339,10 L1334,15 L1332,13 L1337,6 L1331,8 L1340,0Z" fill="#fdf9e6"/></g>
<path d="M1367,6 C1364,12 1366,17 1371,17 C1376,17 1379,13 1378,9 L1391,0 M1367,6 L1371,10 L1375,4 L1381,0" fill="none" stroke="#a0abbc" stroke-width="2.800"/>
<path d="M1400,18 L1404,5 L1412,0 H1429 L1411,14Z M1405,6 L1411,13" fill="none" stroke="#a0abbc" stroke-width="2.800"/>
<path d="M1439,18 L1443,9 L1456,0 L1463,0 L1449,13Z" fill="#a0abbc"/>
<path d="M1473,9 L1485,0 H1502 L1484,19Z" fill="none" stroke="#a0abbc" stroke-width="3"/><path d="M1478,9 L1486,16 M1485,2 L1492,9" stroke="#a0abbc"/>
<path d="M1603,12 C1607,7 1617,7 1621,12 C1617,17 1607,17 1603,12Z" fill="#d8e8fa" stroke="#7fa6cf"/><circle cx="1612" cy="12" r="3.500" fill="#31527a"/>
<rect x="1629.500" y="9.500" width="9" height="7" fill="none" stroke="#fff" stroke-width="1.400"/><path d="M1629,9.500H1639" stroke="#fff" stroke-width="2"/>
<path d="M1655,9 L1663,16 M1663,9 L1655,16" stroke="#fff" stroke-width="2"/>
</svg>
</div></body></html>
